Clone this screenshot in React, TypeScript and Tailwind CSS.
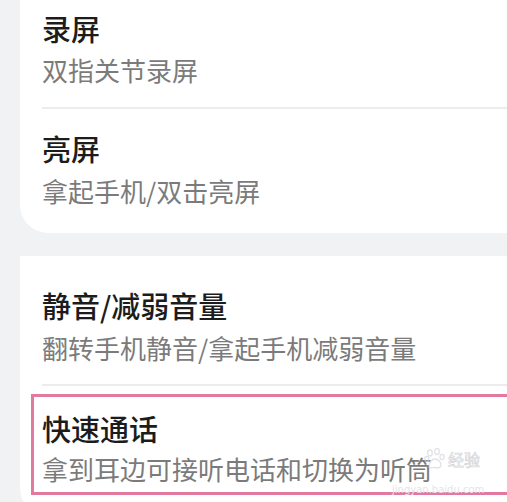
import React from "react";

const font = { fontFamily: '"Noto Sans CJK SC", "Noto Sans", sans-serif' };

function Row({ title, sub, className, gap }: { title: string; sub: string; className?: string; gap: string }) {
  return (
    <div className={className}>
      <div className="text-[29px] leading-[36px] font-medium text-[#1c1c1c]">{title}</div>
      <div className={`${gap} text-[26px] leading-[34px] text-[#7b7b7b]`}>{sub}</div>
    </div>
  );
}

export default function App() {
  return (
    <div className="relative w-[507px] h-[502px] overflow-hidden bg-[#f1f2f4]" style={font}>
      <div className="ml-[20px] w-[540px] bg-white rounded-bl-[28px] pl-[22px]">
        <Row title="录屏" sub="双指关节录屏" gap="mt-[7px]" className="pt-[10px] pb-[20px]" />
        <div className="h-[2px] bg-[#ececec]" />
        <Row title="亮屏" sub="拿起手机/双击亮屏" gap="mt-[8px]" className="pt-[21px] pb-[25px]" />
      </div>
      <div className="mt-[23px] ml-[20px] w-[540px] h-[260px] bg-white rounded-bl-[28px]">
        <Row title="静音/减弱音量" sub="翻转手机静音/拿起手机减弱音量" gap="mt-[8px]" className="pt-[31px] pb-[19px] pl-[22px]" />
        <div className="ml-[22px] h-[2px] bg-[#ececec]" />
        <div className="mt-[8px] ml-[11px] border-[3px] border-[#e27aa0] pl-[8px] pt-[13px] pb-[8px]">
          <div className="text-[29px] leading-[36px] font-medium text-[#1c1c1c]">快速通话</div>
          <div className="mt-[8px] text-[26px] leading-[30px] text-[#7b7b7b]">拿到耳边可接听电话和切换为听筒</div>
        </div>
      </div>
      <div className="absolute left-[424px] top-[447px] pointer-events-none select-none">
        <div className="flex items-center gap-[2px]">
          <svg width="22" height="24" viewBox="0 0 22 24" className="opacity-70">
            <g fill="none" stroke="#d4d6da" strokeWidth="1.3">
              <ellipse cx="6" cy="6" rx="2.3" ry="3" />
              <ellipse cx="13" cy="4.5" rx="2.3" ry="3" />
              <ellipse cx="2.8" cy="12" rx="2" ry="2.6" />
              <ellipse cx="18" cy="10" rx="2" ry="2.6" />
              <path d="M5 19c0-4 3-7 6-7s6 3 6 6c0 3-3 3-6 2.5C8 20 5 22 5 19z" />
            </g>
          </svg>
          <span className="text-[16px] leading-[18px] text-white" style={{ WebkitTextStroke: "0.7px #d3d5d9" }}>经验</span>
        </div>
      </div>
      <div
        className="absolute left-[392px] top-[485px] text-[10px] leading-[10px] text-[#e3e5e8] pointer-events-none select-none"
        style={{ fontFamily: '"DejaVu Sans", sans-serif' }}
      >
        jingyan.baidu.com
      </div>
    </div>
  );
}
